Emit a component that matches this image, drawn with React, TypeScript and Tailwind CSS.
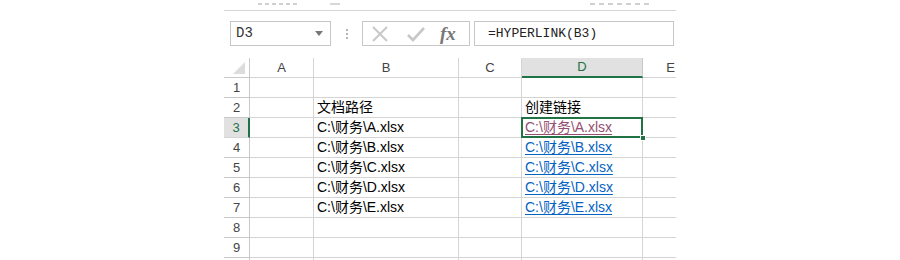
import React from 'react';

const cols = ['A', 'B', 'C', 'D', 'E'];
const files = ['A', 'B', 'C', 'D', 'E'];

const cellFont = { fontFamily: '"Liberation Sans", "Noto Sans CJK SC", sans-serif' };
const monoFont = { fontFamily: '"Liberation Mono", "Noto Sans CJK SC", monospace' };

function Cell({ children, className = '' }: { children?: React.ReactNode; className?: string }) {
	return (
		<div className={`h-[20px] border-r border-b border-[#d4d4d4] flex items-center overflow-hidden whitespace-nowrap ${className}`}>
			{children}
		</div>
	);
}

export default function App() {
	const rows = Array.from({ length: 10 }, (_, i) => i + 1);

	const cellB = (r: number) => {
		if (r === 2) return '文档路径';
		if (r >= 3 && r <= 7) return `C:\\财务\\${files[r - 3]}.xlsx`;
		return null;
	};

	const cellD = (r: number) => {
		if (r === 2) return <span className="text-black">创建链接</span>;
		if (r >= 3 && r <= 7) {
			const color = r === 3 ? 'text-[#954f72] decoration-[#954f72]' : 'text-[#0563c1] decoration-[#0563c1]';
			return <span className={`underline underline-offset-2 ${color}`}>{`C:\\财务\\${files[r - 3]}.xlsx`}</span>;
		}
		return null;
	};

	return (
		<div className="w-full h-[260px] bg-white overflow-hidden">
			<div className="mx-auto w-[452px] overflow-hidden">
				{/* ribbon remnants (group labels cut off by the crop) */}
				<div className="h-[11px] border-b border-[#d5d5d5] flex items-start pt-[3px]">
					<span className="ml-[34px] w-[40px] h-[2px] bg-[repeating-linear-gradient(90deg,#d0d0d0_0_4px,transparent_4px_7px)]" />
					<span className="ml-[32px] w-[10px] h-[2px] bg-[#d8d8d8]" />
					<span className="ml-[250px] w-[60px] h-[2px] bg-[repeating-linear-gradient(90deg,#d0d0d0_0_5px,transparent_5px_9px)]" />
				</div>

				{/* formula bar */}
				<div className="mt-[10px] flex items-center h-[25px]">
					<div className="ml-[6px] w-[101px] h-[25px] border border-[#c6c6c6] flex items-center justify-between pl-[5px] pr-[7px]">
						<span className="text-[14px] text-[#333]" style={monoFont}>D3</span>
						<svg width="8" height="5" viewBox="0 0 8 5"><path d="M0 0h8L4 5z" fill="#777" /></svg>
					</div>
					<div className="ml-[15px] flex flex-col gap-[2px]">
						<span className="w-[2px] h-[2px] bg-[#b5b5b5]" />
						<span className="w-[2px] h-[2px] bg-[#b5b5b5]" />
						<span className="w-[2px] h-[2px] bg-[#b5b5b5]" />
					</div>
					<div className="ml-[14px] w-[108px] h-[25px] border border-[#c6c6c6] flex items-center">
						<svg className="ml-[8px]" width="18" height="18" viewBox="0 0 18 18">
							<path d="M2 2L16 16M16 2L2 16" stroke="#c8c8c8" strokeWidth="2" />
						</svg>
						<svg className="ml-[17px]" width="20" height="18" viewBox="0 0 20 18">
							<path d="M2 10L7 15L18 3" stroke="#c8c8c8" strokeWidth="2.6" fill="none" />
						</svg>
						<span className="ml-[14px] text-[19px] italic font-bold text-[#777] leading-none" style={{ fontFamily: '"Liberation Serif", serif' }}>fx</span>
					</div>
					<div className="ml-[4px] w-[200px] h-[25px] border border-[#c6c6c6] flex items-center pl-[13px]">
						<span className="text-[13px] text-[#222]" style={monoFont}>=HYPERLINK(B3)</span>
					</div>
				</div>

				{/* grid */}
				<div className="mt-[12px] relative" style={cellFont}>
					<div className="grid grid-cols-[26px_64px_145px_63px_121px_56px] w-[475px]">
						<div className="h-[20px] border-r border-b border-[#c8c8c8] flex items-end justify-end pr-[4px] pb-[3px]">
							<svg width="12" height="12" viewBox="0 0 12 12"><path d="M12 0V12H0z" fill="#dcdcdc" /></svg>
						</div>
						{cols.map(c => (
							<div
								key={c}
								className={`h-[20px] border-r flex items-center justify-center text-[13px] ${c === 'D' ? 'bg-[#e1e1e1] text-[#217346] border-b-2 border-b-[#217346] border-r-[#c8c8c8]' : 'text-[#444] border-b border-[#d4d4d4]'}`}
							>
								{c}
							</div>
						))}
						{rows.map(r => (
							<React.Fragment key={r}>
								<div className={`h-[20px] border-b flex items-center justify-center text-[13px] ${r === 3 ? 'bg-[#e1e1e1] text-[#217346] border-r-2 border-r-[#217346] border-b-[#d4d4d4]' : 'text-[#444] border-r border-[#c8c8c8]'}`}>
									{r < 10 ? r : null}
								</div>
								<Cell />
								<Cell className="pl-[3px] text-[14px] text-black">{cellB(r)}</Cell>
								<Cell />
								<Cell className="pl-[3px] text-[14px]">{cellD(r)}</Cell>
								<Cell />
							</React.Fragment>
						))}
					</div>
					{/* selection on D3 */}
					<div className="absolute left-[297px] top-[59px] w-[122px] h-[21px] border-2 border-[#217346] pointer-events-none" />
					<div className="absolute left-[416px] top-[77px] w-[6px] h-[6px] bg-[#217346] border border-white" />
				</div>
			</div>
		</div>
	);
}
